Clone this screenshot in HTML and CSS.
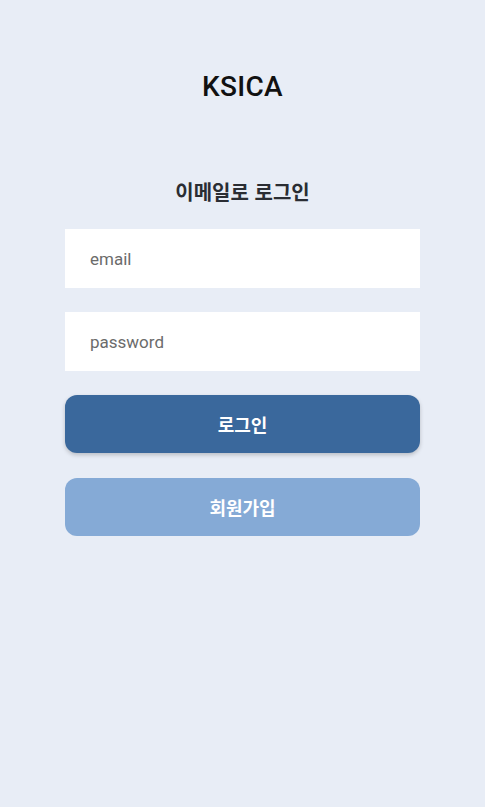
FILE: index.html
```html
<!DOCTYPE html>
<html lang="ko">
<head>
<meta charset="utf-8">
<link rel="stylesheet" href="styles.css">
</head>
<body>
<div class="page">
  <h1 class="brand">KSICA</h1>
  <h2 class="subtitle">이메일로 로그인</h2>
  <form class="form">
    <input class="field" type="text" placeholder="email">
    <input class="field" type="password" placeholder="password">
    <button type="button" class="btn btn-primary">로그인</button>
    <button type="button" class="btn btn-secondary">회원가입</button>
  </form>
</div>
</body>
</html>
```

FILE: styles.css
```css
html, body {
  margin: 0;
  padding: 0;
  height: 100%;
}
body {
  background: #e8edf6;
  font-family: Roboto, "Noto Sans CJK KR", sans-serif;
}
.page {
  display: flex;
  flex-direction: column;
  align-items: center;
  padding-top: 69px;
}
.brand {
  margin: 0;
  font-size: 28px;
  font-weight: 500;
  color: #111;
  line-height: 36px;
  letter-spacing: 0.3px;
}
.subtitle {
  margin: 74px 0 0;
  font-family: "Noto Sans CJK KR", sans-serif;
  font-size: 20px;
  font-weight: 700;
  color: #2a2d33;
  line-height: 26px;
}
.form {
  margin-top: 24px;
  width: 355px;
  display: flex;
  flex-direction: column;
  gap: 24px;
}
.field {
  box-sizing: border-box;
  height: 59px;
  border: none;
  background: #fff;
  padding: 0 25px;
  font-family: Roboto, "Noto Sans CJK KR", sans-serif;
  font-size: 17px;
  color: #333;
  outline: none;
}
.field::placeholder {
  color: #6b6b6b;
}
.btn {
  height: 58px;
  border: none;
  border-radius: 12px;
  color: #fff;
  font-family: "Noto Sans CJK KR", sans-serif;
  font-size: 18px;
  font-weight: 700;
  padding: 0;
}
.btn-primary {
  background: #3a689c;
  box-shadow: 0 2px 4px rgba(0, 0, 0, 0.2);
}
.btn-secondary {
  background: #85aad6;
  margin-top: 1px;
}
```
